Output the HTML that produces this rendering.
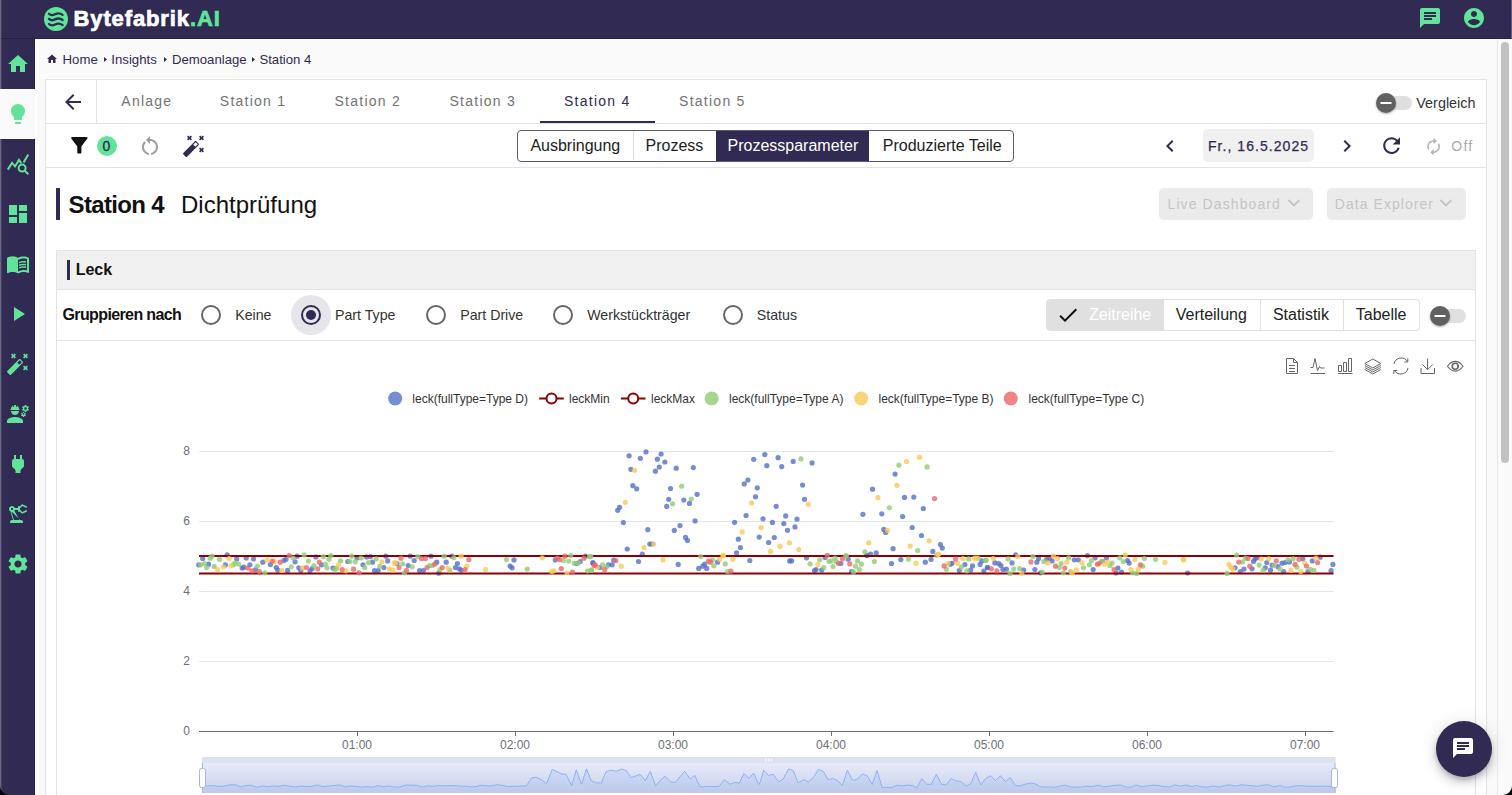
<!DOCTYPE html>
<html><head><meta charset="utf-8"><style>
html,body{margin:0;padding:0;}
body{width:1512px;height:795px;overflow:hidden;position:relative;background:#fafafa;font-family:"Liberation Sans", sans-serif;}
.t{position:absolute;white-space:nowrap;}
.b{position:absolute;}
</style></head><body>
<div class="b" style="left:0px;top:0px;width:1512px;height:39px;background:#312a52"></div>
<div class="b" style="left:0px;top:39px;width:35px;height:756px;background:#312a52"></div>
<div class="b" style="left:0px;top:89px;width:35px;height:50px;background:#fafafa"></div>
<div class="b" style="left:34px;top:39px;width:1px;height:50px;background:#261f4a"></div>
<div class="b" style="left:34px;top:139px;width:1px;height:656px;background:#261f4a"></div>
<div class="b" style="left:35px;top:39px;width:2px;height:756px;background:#fff"></div>
<div class="b" style="left:0px;top:38px;width:1512px;height:1px;background:#261f48"></div>
<div class="b" style="left:35px;top:39px;width:1462px;height:1px;background:#fff"></div>
<svg class="b" style="left:6px;top:52px;color:#62e39a" width="24" height="24" viewBox="0 0 24 24" fill="#62e39a"><path d="M10 20v-6h4v6h5v-8h3L12 3 2 12h3v8z"/></svg>
<svg class="b" style="left:6px;top:102px;color:#62e39a" width="24" height="24" viewBox="0 0 24 24" fill="#62e39a"><path d="M9 21c0 .55.45 1 1 1h4c.55 0 1-.45 1-1v-1H9v1zm3-19C8.14 2 5 5.14 5 9c0 2.38 1.19 4.47 3 5.74V17c0 .55.45 1 1 1h6c.55 0 1-.45 1-1v-2.26c1.81-1.27 3-3.36 3-5.74 0-3.86-3.14-7-7-7z"/></svg>
<svg class="b" style="left:6px;top:152px;color:#62e39a" width="24" height="24" viewBox="0 0 24 24" fill="#62e39a"><g fill="none" stroke="currentColor" stroke-width="2"><path d="M1.8 17.6 6 10.9l3 3.5 4-6.5 2.2 3.3"/><path d="M17.6 10.6 22.2 2.6"/><circle cx="16.1" cy="16.1" r="3.5"/><path d="M18.6 18.6 22.3 22.3"/></g></svg>
<svg class="b" style="left:6px;top:202px;color:#62e39a" width="24" height="24" viewBox="0 0 24 24" fill="#62e39a"><path d="M3 13h8V3H3v10zm0 8h8v-6H3v6zm10 0h8V11h-8v10zm0-18v6h8V3h-8z"/></svg>
<svg class="b" style="left:6px;top:252px;color:#62e39a" width="24" height="24" viewBox="0 0 24 24" fill="#62e39a"><path d="M21 5c-1.11-.35-2.33-.5-3.5-.5-1.95 0-4.05.4-5.5 1.5-1.45-1.1-3.55-1.5-5.5-1.5S2.45 4.9 1 6v14.65c0 .25.25.5.5.5.1 0 .15-.05.25-.05C3.1 20.45 5.05 20 6.5 20c1.95 0 4.05.4 5.5 1.5 1.35-.85 3.8-1.5 5.5-1.5 1.65 0 3.35.3 4.75 1.05.1.05.15.05.25.05.25 0 .5-.25.5-.5V6c-.6-.45-1.25-.75-2-1zm0 13.5c-1.1-.35-2.3-.5-3.5-.5-1.7 0-4.15.65-5.5 1.5V8c1.35-.85 3.8-1.5 5.5-1.5 1.2 0 2.4.15 3.5.5v11.5z"/><path d="M17.5 10.5c.88 0 1.73.09 2.5.26V9.24c-.79-.15-1.64-.24-2.5-.24-1.7 0-3.24.29-4.5.83v1.66c1.13-.64 2.7-.99 4.5-.99zM13 12.49v1.66c1.13-.64 2.7-.99 4.5-.99.88 0 1.73.09 2.5.26V11.9c-.79-.15-1.64-.24-2.5-.24-1.7 0-3.24.3-4.5.83zM17.5 14.33c-1.7 0-3.24.29-4.5.83v1.66c1.13-.64 2.7-.99 4.5-.99.88 0 1.73.09 2.5.26v-1.52c-.79-.16-1.64-.24-2.5-.24z"/><path d="M1.5 6.2C3 5.2 4.6 4.7 6.5 4.7s3.9.4 5.3 1.4V20.8C10.3 19.9 8.3 19.5 6.5 19.5c-1.9 0-3.6.4-5 1z"/></svg>
<svg class="b" style="left:6px;top:302px;color:#62e39a" width="24" height="24" viewBox="0 0 24 24" fill="#62e39a"><path d="M8 5v14l11-7z"/></svg>
<svg class="b" style="left:6px;top:352px;color:#62e39a" width="24" height="24" viewBox="0 0 24 24" fill="#62e39a"><g stroke="currentColor" stroke-width="1.6" fill="none"><path d="M5.6 2.1l3.8 3.8M9.4 2.1 5.6 5.9M17.6 2.1l3.8 3.8M21.4 2.1l-3.8 3.8M17.6 14.1l3.8 3.8M21.4 14.1l-3.8 3.8"/></g><path d="M13.34 12.78l2.44-2.44-2.12-2.12-2.44 2.44zM14.37 7.29l2.34 2.34c.39.37.39 1.02 0 1.41L5.04 22.71c-.39.39-1.04.39-1.41 0l-2.34-2.34c-.39-.37-.39-1.02 0-1.41L12.96 7.29c.39-.39 1.04-.39 1.41 0z"/></svg>
<svg class="b" style="left:6px;top:402px;color:#62e39a" width="24" height="24" viewBox="0 0 24 24" fill="#62e39a"><path d="M9 15c-2.67 0-8 1.34-8 4v2h16v-2c0-2.66-5.33-4-8-4zM5 9c0 2.21 1.79 4 4 4s4-1.79 4-4M4.74 8h8.52c.27 0 .49-.22.49-.49v-.02c0-.27-.22-.49-.49-.49H13c0-1.48-.81-2.75-2-3.45v.95c0 .28-.22.5-.5.5s-.5-.22-.5-.5V3.14C9.68 3.06 9.35 3 9 3s-.68.06-1 .14V4.5c0 .28-.22.5-.5.5S7 4.78 7 4.5v-.95C5.81 4.25 5 5.52 5 7h-.26c-.27 0-.49.22-.49.49v.03c0 .26.22.48.49.48z"/><path d="M21.98 6.23l.93-.83-.75-1.3-1.19.39c-.14-.11-.3-.2-.47-.27L20.25 3h-1.5l-.25 1.22c-.17.07-.33.16-.48.27l-1.18-.39-.75 1.3.93.83c-.02.17-.02.35 0 .52l-.93.85.75 1.3 1.2-.38c.13.1.28.18.43.25l.28 1.23h1.5l.27-1.22c.16-.07.3-.15.44-.25l1.19.38.75-1.3-.93-.85c.03-.19.02-.36.01-.53zM19.5 7.75c-.69 0-1.25-.56-1.25-1.25s.56-1.25 1.25-1.25 1.25.56 1.25 1.25-.56 1.25-1.25 1.25zM19.4 10.79l-.85.28c-.1-.08-.21-.14-.33-.19l-.18-.88h-1.07l-.18.87c-.12.05-.24.12-.34.19l-.84-.28-.54.93.66.59c-.01.13-.01.25 0 .37l-.66.61.54.93.86-.27c.1.07.2.13.31.18l.18.88h1.07l.19-.87c.11-.05.22-.11.32-.18l.85.27.54-.93-.66-.61c.01-.13.01-.25 0-.37l.66-.59-.53-.93zM17.5 12.75c-.49 0-.89-.4-.89-.89 0-.49.4-.89.89-.89s.89.4.89.89c0 .49-.4.89-.89.89z"/></svg>
<svg class="b" style="left:6px;top:452px;color:#62e39a" width="24" height="24" viewBox="0 0 24 24" fill="#62e39a"><path d="M16.01 7 16 3h-2v4h-4V3H8v4h-.01C7 6.99 6 7.99 6 8.99v5.49L9.5 18v3h5v-3l3.5-3.51v-5.5c0-1-1-2-1.99-1.99z"/></svg>
<svg class="b" style="left:6px;top:502px;color:#62e39a" width="24" height="24" viewBox="0 0 24 24" fill="#62e39a"><path d="M19.93 8.35l-3.6 1.68L14 7.7V6.3l2.33-2.33 3.6 1.68c.38.18.82.01 1-.36.18-.38.01-.82-.36-1l-3.92-1.83c-.38-.18-.83-.1-1.13.2L13.78 4.4C13.6 4.16 13.32 4 13 4c-.55 0-1 .45-1 1v1H8.82C8.4 4.84 7.3 4 6 4 4.34 4 3 5.34 3 7c0 1.1.6 2.05 1.48 2.57L7.08 18H6c-1.1 0-2 .9-2 2v1h13v-1c0-1.1-.9-2-2-2h-1.62L8.41 8.77c.17-.24.31-.49.41-.77H12v1c0 .55.45 1 1 1 .32 0 .6-.16.78-.4l1.74 1.74c.3.3.75.38 1.13.2l3.92-1.83c.38-.18.54-.62.36-1-.18-.37-.62-.54-1-.36zM6 8c-.55 0-1-.45-1-1s.45-1 1-1 1 .45 1 1-.45 1-1 1zm8.11 10H7.95L5.5 10.1c.22-.01.43-.06.63-.12L14.11 18z"/></svg>
<svg class="b" style="left:6px;top:552px;color:#62e39a" width="24" height="24" viewBox="0 0 24 24" fill="#62e39a"><path d="M19.14 12.94c.04-.3.06-.61.06-.94 0-.32-.02-.64-.07-.94l2.03-1.58c.18-.14.23-.41.12-.61l-1.92-3.32c-.12-.22-.37-.29-.59-.22l-2.39.96c-.5-.38-1.03-.7-1.62-.94l-.36-2.54c-.04-.24-.24-.41-.48-.41h-3.84c-.24 0-.43.17-.47.41l-.36 2.54c-.59.24-1.13.57-1.62.94l-2.39-.96c-.22-.08-.47 0-.59.22L2.74 8.87c-.12.21-.08.47.12.61l2.03 1.58c-.05.3-.09.63-.09.94s.02.64.07.94l-2.03 1.58c-.18.14-.23.41-.12.61l1.92 3.32c.12.22.37.29.59.22l2.39-.96c.5.38 1.03.7 1.62.94l.36 2.54c.05.24.24.41.48.41h3.84c.24 0 .44-.17.47-.41l.36-2.54c.59-.24 1.13-.56 1.62-.94l2.39.96c.22.08.47 0 .59-.22l1.92-3.32c.12-.22.07-.47-.12-.61l-2.01-1.58zM12 15.6c-1.98 0-3.6-1.62-3.6-3.6s1.62-3.6 3.6-3.6 3.6 1.62 3.6 3.6-1.62 3.6-3.6 3.6z"/></svg>
<svg class="b" style="left:44px;top:7px;" width="24" height="24" viewBox="0 0 24 24"><circle cx="12" cy="12" r="12" fill="#62e39a"/><g fill="none" stroke="#312a52" stroke-width="2.3" stroke-linecap="round"><path d="M5 6.8C6.6 8.4 8.6 8.5 11 7.3S15.6 5.6 18.6 7.9"/><path d="M5 11.9C6.6 13.5 8.6 13.6 11 12.4S15.6 10.7 18.6 13"/><path d="M5 17C6.6 18.6 8.6 18.7 11 17.5S15.6 15.8 18.6 18.1"/></g></svg>
<div class="t" style="left:73.5px;top:8.18px;font-size:22px;line-height:22px;color:#fff;font-weight:bold;letter-spacing:0.88px;-webkit-text-stroke:0.7px #fff">Bytefabrik<span style="color:#62e39a;-webkit-text-stroke:0.7px #62e39a">.AI</span></div>
<svg class="b" style="left:1417.8px;top:6.1px;color:#62e39a" width="24" height="24" viewBox="0 0 24 24" fill="#62e39a"><path d="M20 2H4c-1.1 0-1.99.9-1.99 2L2 22l4-4h14c1.1 0 2-.9 2-2V4c0-1.1-.9-2-2-2zM6 9h12v2H6V9zm8 5H6v-2h8v2zm4-6H6V6h12v2z"/></svg>
<svg class="b" style="left:1461.8px;top:6.2px;color:#62e39a" width="24" height="24" viewBox="0 0 24 24" fill="#62e39a"><path d="M12 2C6.48 2 2 6.48 2 12s4.48 10 10 10 10-4.48 10-10S17.52 2 12 2zm0 3c1.66 0 3 1.34 3 3s-1.34 3-3 3-3-1.34-3-3 1.34-3 3-3zm0 14.2c-2.5 0-4.71-1.28-6-3.22.03-1.99 4-3.08 6-3.08 1.99 0 5.97 1.09 6 3.08-1.29 1.94-3.5 3.22-6 3.22z"/></svg>
<svg class="b" style="left:46px;top:53px;color:#312a52" width="12" height="12" viewBox="0 0 24 24" fill="#312a52"><path d="M10 20v-6h4v6h5v-8h3L12 3 2 12h3v8z"/></svg>
<div class="t" style="left:62.6px;top:52.73px;font-size:13.2px;line-height:13.2px;color:#312a52;font-weight:normal;letter-spacing:0px;">Home</div>
<div class="t" style="left:111.3px;top:52.73px;font-size:13.2px;line-height:13.2px;color:#312a52;font-weight:normal;letter-spacing:0px;">Insights</div>
<div class="t" style="left:171.9px;top:52.73px;font-size:13.2px;line-height:13.2px;color:#312a52;font-weight:normal;letter-spacing:0px;">Demoanlage</div>
<div class="t" style="left:259.4px;top:52.73px;font-size:13.2px;line-height:13.2px;color:#312a52;font-weight:normal;letter-spacing:0px;">Station 4</div>
<svg class="b" style="left:104px;top:56px;" width="4" height="7" viewBox="0 0 4 7"><path d="M0 1 3 3.5 0 6z" fill="#312a52"/></svg>
<svg class="b" style="left:164px;top:56px;" width="4" height="7" viewBox="0 0 4 7"><path d="M0 1 3 3.5 0 6z" fill="#312a52"/></svg>
<svg class="b" style="left:252px;top:56px;" width="4" height="7" viewBox="0 0 4 7"><path d="M0 1 3 3.5 0 6z" fill="#312a52"/></svg>
<div class="b" style="left:45px;top:79px;width:1442px;height:800px;background:#fff;border:1px solid #e3e3e3;box-sizing:border-box"></div>
<div class="b" style="left:46px;top:123px;width:1440px;height:1px;background:#e3e3e3"></div>
<div class="b" style="left:96px;top:80px;width:1px;height:43px;background:#e3e3e3"></div>
<svg class="b" style="left:61px;top:90px;color:#312a52" width="24" height="24" viewBox="0 0 24 24" fill="#312a52"><path d="M20 11H7.83l5.59-5.59L12 4l-8 8 8 8 1.41-1.41L7.83 13H20v-2z"/></svg>
<div class="t" style="left:121.3px;top:94.25px;font-size:14px;line-height:14px;color:#737373;font-weight:normal;letter-spacing:1.25px;">Anlage</div>
<div class="t" style="left:219.8px;top:94.25px;font-size:14px;line-height:14px;color:#737373;font-weight:normal;letter-spacing:1.25px;">Station 1</div>
<div class="t" style="left:334.5px;top:94.25px;font-size:14px;line-height:14px;color:#737373;font-weight:normal;letter-spacing:1.25px;">Station 2</div>
<div class="t" style="left:449.5px;top:94.25px;font-size:14px;line-height:14px;color:#737373;font-weight:normal;letter-spacing:1.25px;">Station 3</div>
<div class="t" style="left:564px;top:94.25px;font-size:14px;line-height:14px;color:#312a52;font-weight:normal;letter-spacing:1.25px;">Station 4</div>
<div class="t" style="left:679.1px;top:94.25px;font-size:14px;line-height:14px;color:#737373;font-weight:normal;letter-spacing:1.25px;">Station 5</div>
<div class="b" style="left:540px;top:121px;width:115px;height:2px;background:#312a52"></div>
<div class="b" style="left:1388px;top:96px;width:24px;height:14px;background:#e0e0e0;border-radius:7px"></div>
<svg class="b" style="left:1376px;top:93px;filter:drop-shadow(0 1px 1px rgba(0,0,0,.3))" width="20" height="20" viewBox="0 0 20 20"><circle cx="10" cy="10" r="10" fill="#616161"/><rect x="4.5" y="9" width="11" height="2" fill="#fff"/></svg>
<div class="t" style="left:1416.3px;top:95.91px;font-size:14.4px;line-height:14.4px;color:#333;font-weight:normal;letter-spacing:0px;">Vergleich</div>
<div class="b" style="left:46px;top:167px;width:1440px;height:1px;background:#e3e3e3"></div>
<svg class="b" style="left:67.3px;top:133.4px;color:#111" width="24.7" height="24.7" viewBox="0 0 24 24" fill="#111"><path d="M4.25 5.61C6.27 8.2 10 13 10 13v6c0 .55.45 1 1 1h2c.55 0 1-.45 1-1v-6s3.72-4.8 5.74-7.39c.51-.66.04-1.61-.79-1.61H5.04c-.83 0-1.3.95-.79 1.61z"/></svg>
<svg class="b" style="left:97px;top:136px;" width="20" height="20" viewBox="0 0 20 20"><circle cx="10" cy="10" r="10" fill="#62e39a"/></svg>
<div class="t" style="left:102.6px;top:139.45px;font-size:14px;line-height:14px;color:#312a52;font-weight:normal;letter-spacing:0px;-webkit-text-stroke:0.3px #312a52">0</div>
<svg class="b" style="left:137.8px;top:134.4px;color:#9e9e9e" width="24" height="24" viewBox="0 0 24 24" fill="#9e9e9e"><path d="M12 5V2L8 6l4 4V7c3.31 0 6 2.69 6 6 0 2.97-2.17 5.43-5 5.91v2.02c3.95-.49 7-3.85 7-7.93 0-4.42-3.58-8-8-8zm-6 8c0-1.65.67-3.15 1.76-4.24L6.34 7.34C4.9 8.79 4 10.79 4 13c0 4.08 3.05 7.44 7 7.93v-2.02c-2.83-.48-5-2.94-5-5.91z"/></svg>
<svg class="b" style="left:182px;top:133.7px;color:#312a52" width="24" height="24" viewBox="0 0 24 24" fill="#312a52"><g stroke="currentColor" stroke-width="1.6" fill="none"><path d="M5.6 2.1l3.8 3.8M9.4 2.1 5.6 5.9M17.6 2.1l3.8 3.8M21.4 2.1l-3.8 3.8M17.6 14.1l3.8 3.8M21.4 14.1l-3.8 3.8"/></g><path d="M13.34 12.78l2.44-2.44-2.12-2.12-2.44 2.44zM14.37 7.29l2.34 2.34c.39.37.39 1.02 0 1.41L5.04 22.71c-.39.39-1.04.39-1.41 0l-2.34-2.34c-.39-.37-.39-1.02 0-1.41L12.96 7.29c.39-.39 1.04-.39 1.41 0z"/></svg>
<div class="b" style="left:517px;top:130px;width:497px;height:32px;border:1px solid #5d587a;border-radius:4px;box-sizing:border-box;overflow:hidden"></div>
<div class="b" style="left:716px;top:131px;width:153px;height:30px;background:#312a52"></div>
<div class="b" style="left:633px;top:131px;width:1px;height:29px;background:#e0e0e0"></div>
<div class="t" style="left:530.4px;top:138.36px;font-size:16px;line-height:16px;color:#222;font-weight:normal;letter-spacing:0px;">Ausbringung</div>
<div class="t" style="left:645.5px;top:138.36px;font-size:16px;line-height:16px;color:#222;font-weight:normal;letter-spacing:0px;">Prozess</div>
<div class="t" style="left:727.5px;top:138.36px;font-size:16px;line-height:16px;color:#fff;font-weight:normal;letter-spacing:0px;">Prozessparameter</div>
<div class="t" style="left:882.8px;top:138.36px;font-size:16px;line-height:16px;color:#222;font-weight:normal;letter-spacing:0px;">Produzierte Teile</div>
<svg class="b" style="left:1157.7px;top:133.8px;color:#312a52" width="24" height="24" viewBox="0 0 24 24" fill="#312a52"><path d="M15.41 7.41 14 6l-6 6 6 6 1.41-1.41L10.83 12z"/></svg>
<div class="b" style="left:1203px;top:129px;width:111px;height:33px;background:#f0f0f0;border-radius:5px"></div>
<div class="t" style="left:1208px;top:138.55px;font-size:14px;line-height:14px;color:#312a52;font-weight:normal;letter-spacing:1.05px;-webkit-text-stroke:0.25px #312a52">Fr., 16.5.2025</div>
<svg class="b" style="left:1335.2px;top:133.8px;color:#312a52" width="24" height="24" viewBox="0 0 24 24" fill="#312a52"><path d="M10 6 8.59 7.41 13.17 12l-4.58 4.59L10 18l6-6z"/></svg>
<svg class="b" style="left:1379.2px;top:133.2px;color:#312a52" width="25.2" height="25.2" viewBox="0 0 24 24" fill="#312a52"><path d="M17.65 6.35C16.2 4.9 14.21 4 12 4c-4.42 0-7.99 3.58-7.99 8s3.57 8 7.99 8c3.73 0 6.84-2.55 7.73-6h-2.08c-.82 2.33-3.04 4-5.65 4-3.31 0-6-2.69-6-6s2.69-6 6-6c1.66 0 3.14.69 4.22 1.78L13 11h7V4l-2.35 2.35z"/></svg>
<svg class="b" style="left:1424px;top:136.6px;color:#b3b3b3" width="19.2" height="19.2" viewBox="0 0 24 24" fill="#b3b3b3"><path d="M12 6v3l4-4-4-4v3c-4.42 0-8 3.58-8 8 0 1.57.46 3.03 1.24 4.26L6.7 14.8c-.45-.83-.7-1.79-.7-2.8 0-3.31 2.69-6 6-6zm6.76 1.74L17.3 9.2c.44.84.7 1.79.7 2.8 0 3.31-2.69 6-6 6v-3l-4 4 4 4v-3c4.42 0 8-3.58 8-8 0-1.57-.46-3.03-1.24-4.26z"/></svg>
<div class="t" style="left:1451.3px;top:138.55px;font-size:14px;line-height:14px;color:#ababab;font-weight:normal;letter-spacing:1.25px;">Off</div>
<div class="b" style="left:56px;top:188px;width:4px;height:32px;background:#312a52"></div>
<div class="t" style="left:68.6px;top:192.58px;font-size:24px;line-height:24px;color:#111;font-weight:bold;letter-spacing:-0.68px;">Station 4</div>
<div class="t" style="left:181px;top:192.58px;font-size:24px;line-height:24px;color:#111;font-weight:normal;letter-spacing:0px;">Dichtprüfung</div>
<div class="b" style="left:1159px;top:188px;width:154px;height:32px;background:#ebebeb;border-radius:5px"></div>
<div class="t" style="left:1167.5px;top:197.15px;font-size:14px;line-height:14px;color:#c4c4c4;font-weight:normal;letter-spacing:1.1px;">Live Dashboard</div>
<svg class="b" style="left:1287px;top:198px;" width="14" height="10" viewBox="0 0 14 10"><path d="M1.5 2 7 7.5 12.5 2" fill="none" stroke="#c4c4c4" stroke-width="1.8"/></svg>
<div class="b" style="left:1327px;top:188px;width:139px;height:32px;background:#ebebeb;border-radius:5px"></div>
<div class="t" style="left:1334.8px;top:197.15px;font-size:14px;line-height:14px;color:#c4c4c4;font-weight:normal;letter-spacing:1.05px;">Data Explorer</div>
<svg class="b" style="left:1439px;top:198px;" width="14" height="10" viewBox="0 0 14 10"><path d="M1.5 2 7 7.5 12.5 2" fill="none" stroke="#c4c4c4" stroke-width="1.8"/></svg>
<div class="b" style="left:56px;top:250px;width:1420px;height:700px;background:#fff;border:1px solid #e3e3e3;box-sizing:border-box"></div>
<div class="b" style="left:57px;top:251px;width:1418px;height:38px;background:#f0f0f0"></div>
<div class="b" style="left:57px;top:289px;width:1418px;height:1px;background:#e3e3e3"></div>
<div class="b" style="left:67px;top:260px;width:3px;height:20px;background:#312a52"></div>
<div class="t" style="left:75.7px;top:262.26px;font-size:16px;line-height:16px;color:#111;font-weight:bold;letter-spacing:0px;">Leck</div>
<div class="b" style="left:57px;top:340px;width:1418px;height:1px;background:#e3e3e3"></div>
<div class="t" style="left:62.5px;top:307.06px;font-size:16px;line-height:16px;color:#111;font-weight:bold;letter-spacing:-0.62px;">Gruppieren nach</div>
<svg class="b" style="left:200.6px;top:305px;" width="20" height="20" viewBox="0 0 20 20"><circle cx="10" cy="10" r="9" fill="none" stroke="#666" stroke-width="2"/></svg>
<div class="t" style="left:235.2px;top:308.28px;font-size:14.2px;line-height:14.2px;color:#333;font-weight:normal;letter-spacing:0px;">Keine</div>
<svg class="b" style="left:290.5px;top:295px;" width="40" height="40" viewBox="0 0 40 40"><circle cx="20" cy="20" r="20" fill="#312a52" fill-opacity="0.12"/><circle cx="20" cy="20" r="9" fill="none" stroke="#312a52" stroke-width="2"/><circle cx="20" cy="20" r="5" fill="#312a52"/></svg>
<div class="t" style="left:335px;top:308.28px;font-size:14.2px;line-height:14.2px;color:#333;font-weight:normal;letter-spacing:0px;">Part Type</div>
<svg class="b" style="left:425.9px;top:305px;" width="20" height="20" viewBox="0 0 20 20"><circle cx="10" cy="10" r="9" fill="none" stroke="#666" stroke-width="2"/></svg>
<div class="t" style="left:460.2px;top:308.28px;font-size:14.2px;line-height:14.2px;color:#333;font-weight:normal;letter-spacing:0px;">Part Drive</div>
<svg class="b" style="left:553px;top:305px;" width="20" height="20" viewBox="0 0 20 20"><circle cx="10" cy="10" r="9" fill="none" stroke="#666" stroke-width="2"/></svg>
<div class="t" style="left:587.2px;top:308.28px;font-size:14.2px;line-height:14.2px;color:#333;font-weight:normal;letter-spacing:0px;">Werkstückträger</div>
<svg class="b" style="left:722.9px;top:305px;" width="20" height="20" viewBox="0 0 20 20"><circle cx="10" cy="10" r="9" fill="none" stroke="#666" stroke-width="2"/></svg>
<div class="t" style="left:756.8px;top:308.28px;font-size:14.2px;line-height:14.2px;color:#333;font-weight:normal;letter-spacing:0px;">Status</div>
<div class="b" style="left:1046px;top:299px;width:374px;height:32px;border:1px solid #e0e0e0;border-radius:4px;box-sizing:border-box"></div>
<div class="b" style="left:1047px;top:300px;width:116px;height:30px;background:#e0e0e0"></div>
<div class="b" style="left:1163px;top:300px;width:1px;height:30px;background:#e0e0e0"></div>
<div class="b" style="left:1260px;top:300px;width:1px;height:30px;background:#e0e0e0"></div>
<div class="b" style="left:1343px;top:300px;width:1px;height:30px;background:#e0e0e0"></div>
<svg class="b" style="left:1056px;top:302.7px;color:#111" width="24" height="24" viewBox="0 0 24 24" fill="#111"><path d="M9 16.17 4.83 12l-1.42 1.42L9 19 21 7l-1.41-1.41z"/></svg>
<div class="t" style="left:1089px;top:307.46px;font-size:16px;line-height:16px;color:#fff;font-weight:normal;letter-spacing:0px;">Zeitreihe</div>
<div class="t" style="left:1175.7px;top:307.46px;font-size:16px;line-height:16px;color:#222;font-weight:normal;letter-spacing:0px;">Verteilung</div>
<div class="t" style="left:1272.9px;top:307.46px;font-size:16px;line-height:16px;color:#222;font-weight:normal;letter-spacing:0px;">Statistik</div>
<div class="t" style="left:1355.8px;top:307.46px;font-size:16px;line-height:16px;color:#222;font-weight:normal;letter-spacing:0px;">Tabelle</div>
<div class="b" style="left:1440px;top:309px;width:26px;height:14px;background:#e0e0e0;border-radius:7px"></div>
<svg class="b" style="left:1430px;top:306px;filter:drop-shadow(0 1px 1px rgba(0,0,0,.3))" width="20" height="20" viewBox="0 0 20 20"><circle cx="10" cy="10" r="10" fill="#616161"/><rect x="4.5" y="9" width="11" height="2" fill="#fff"/></svg>
<svg class="b" style="left:0px;top:0px;" width="1512" height="795" viewBox="0 0 1512 795"><path d="M199 661.5H1333.6" stroke="#e0e6f1" stroke-width="1"/><path d="M199 591.5H1333.6" stroke="#e0e6f1" stroke-width="1"/><path d="M199 521.5H1333.6" stroke="#e0e6f1" stroke-width="1"/><path d="M199 451.5H1333.6" stroke="#e0e6f1" stroke-width="1"/><path d="M199 731.5H1333.6" stroke="#6e7079" stroke-width="1"/><path d="M357.5 731V736" stroke="#6e7079" stroke-width="1"/><path d="M515.5 731V736" stroke="#6e7079" stroke-width="1"/><path d="M673.5 731V736" stroke="#6e7079" stroke-width="1"/><path d="M831.5 731V736" stroke="#6e7079" stroke-width="1"/><path d="M989.5 731V736" stroke="#6e7079" stroke-width="1"/><path d="M1147.5 731V736" stroke="#6e7079" stroke-width="1"/><path d="M1305.5 731V736" stroke="#6e7079" stroke-width="1"/><g fill="#5470c6" fill-opacity="0.8"><circle cx="629.1" cy="455.8" r="2.6"/><circle cx="640.3" cy="458.3" r="2.6"/><circle cx="646.0" cy="451.9" r="2.6"/><circle cx="661.1" cy="454.0" r="2.6"/><circle cx="657.4" cy="459.2" r="2.6"/><circle cx="664.9" cy="462.0" r="2.6"/><circle cx="659.3" cy="467.0" r="2.6"/><circle cx="655.4" cy="471.2" r="2.6"/><circle cx="630.9" cy="469.3" r="2.6"/><circle cx="676.2" cy="468.2" r="2.6"/><circle cx="693.3" cy="467.6" r="2.6"/><circle cx="632.8" cy="485.7" r="2.6"/><circle cx="636.7" cy="488.8" r="2.6"/><circle cx="670.5" cy="488.5" r="2.6"/><circle cx="697.1" cy="494.3" r="2.6"/><circle cx="668.7" cy="499.3" r="2.6"/><circle cx="683.8" cy="500.1" r="2.6"/><circle cx="689.5" cy="503.4" r="2.6"/><circle cx="666.7" cy="506.4" r="2.6"/><circle cx="619.6" cy="507.3" r="2.6"/><circle cx="617.7" cy="510.3" r="2.6"/><circle cx="623.4" cy="522.6" r="2.6"/><circle cx="695.1" cy="520.9" r="2.6"/><circle cx="647.8" cy="529.7" r="2.6"/><circle cx="680.0" cy="525.6" r="2.6"/><circle cx="674.3" cy="530.4" r="2.6"/><circle cx="685.6" cy="537.4" r="2.6"/><circle cx="687.5" cy="540.5" r="2.6"/><circle cx="649.8" cy="544.0" r="2.6"/><circle cx="652.1" cy="544.0" r="2.6"/><circle cx="627.2" cy="549.0" r="2.6"/><circle cx="642.3" cy="554.0" r="2.6"/><circle cx="753.7" cy="459.3" r="2.6"/><circle cx="764.8" cy="454.6" r="2.6"/><circle cx="778.1" cy="457.7" r="2.6"/><circle cx="766.8" cy="465.7" r="2.6"/><circle cx="781.7" cy="466.6" r="2.6"/><circle cx="793.2" cy="461.4" r="2.6"/><circle cx="812.1" cy="462.9" r="2.6"/><circle cx="747.9" cy="480.0" r="2.6"/><circle cx="744.2" cy="483.9" r="2.6"/><circle cx="757.3" cy="487.8" r="2.6"/><circle cx="802.6" cy="485.1" r="2.6"/><circle cx="755.5" cy="496.8" r="2.6"/><circle cx="804.5" cy="499.3" r="2.6"/><circle cx="776.2" cy="506.3" r="2.6"/><circle cx="746.1" cy="515.5" r="2.6"/><circle cx="763.0" cy="518.8" r="2.6"/><circle cx="785.7" cy="515.9" r="2.6"/><circle cx="797.0" cy="519.2" r="2.6"/><circle cx="734.6" cy="522.3" r="2.6"/><circle cx="772.4" cy="522.4" r="2.6"/><circle cx="783.8" cy="523.6" r="2.6"/><circle cx="795.0" cy="526.9" r="2.6"/><circle cx="787.5" cy="530.3" r="2.6"/><circle cx="738.4" cy="539.2" r="2.6"/><circle cx="759.2" cy="537.1" r="2.6"/><circle cx="774.3" cy="537.5" r="2.6"/><circle cx="768.6" cy="542.5" r="2.6"/><circle cx="740.4" cy="547.6" r="2.6"/><circle cx="736.6" cy="552.8" r="2.6"/><circle cx="895.1" cy="474.1" r="2.6"/><circle cx="872.5" cy="489.2" r="2.6"/><circle cx="904.5" cy="497.4" r="2.6"/><circle cx="913.8" cy="497.1" r="2.6"/><circle cx="923.3" cy="508.5" r="2.6"/><circle cx="862.9" cy="514.3" r="2.6"/><circle cx="881.8" cy="513.8" r="2.6"/><circle cx="902.6" cy="516.5" r="2.6"/><circle cx="883.8" cy="529.4" r="2.6"/><circle cx="885.7" cy="532.4" r="2.6"/><circle cx="912.2" cy="527.5" r="2.6"/><circle cx="921.5" cy="535.5" r="2.6"/><circle cx="940.4" cy="544.5" r="2.6"/><circle cx="942.3" cy="548.1" r="2.6"/><circle cx="893.1" cy="548.7" r="2.6"/><circle cx="932.8" cy="551.4" r="2.6"/><circle cx="876.2" cy="552.9" r="2.6"/><circle cx="870.6" cy="554.1" r="2.6"/><circle cx="866.9" cy="555.6" r="2.6"/><circle cx="198.7" cy="564.8" r="2.6"/><circle cx="202.7" cy="558.5" r="2.6"/><circle cx="208.5" cy="564.2" r="2.6"/><circle cx="225.4" cy="564.8" r="2.6"/><circle cx="227.1" cy="554.9" r="2.6"/><circle cx="236.7" cy="558.9" r="2.6"/><circle cx="242.2" cy="568.1" r="2.6"/><circle cx="243.9" cy="567.2" r="2.6"/><circle cx="246.2" cy="558.0" r="2.6"/><circle cx="249.9" cy="564.8" r="2.6"/><circle cx="253.6" cy="558.9" r="2.6"/><circle cx="255.6" cy="569.5" r="2.6"/><circle cx="262.9" cy="562.2" r="2.6"/><circle cx="270.4" cy="564.6" r="2.6"/><circle cx="276.3" cy="567.5" r="2.6"/><circle cx="277.7" cy="570.1" r="2.6"/><circle cx="283.9" cy="560.6" r="2.6"/><circle cx="286.0" cy="559.3" r="2.6"/><circle cx="287.6" cy="570.4" r="2.6"/><circle cx="295.1" cy="561.8" r="2.6"/><circle cx="297.1" cy="556.2" r="2.6"/><circle cx="298.8" cy="567.8" r="2.6"/><circle cx="300.8" cy="570.4" r="2.6"/><circle cx="310.1" cy="570.8" r="2.6"/><circle cx="312.1" cy="568.5" r="2.6"/><circle cx="315.8" cy="556.9" r="2.6"/><circle cx="321.6" cy="564.8" r="2.6"/><circle cx="333.0" cy="568.1" r="2.6"/><circle cx="347.8" cy="561.5" r="2.6"/><circle cx="357.0" cy="558.0" r="2.6"/><circle cx="363.0" cy="564.8" r="2.6"/><circle cx="366.6" cy="556.9" r="2.6"/><circle cx="370.5" cy="556.6" r="2.6"/><circle cx="372.5" cy="562.2" r="2.6"/><circle cx="374.5" cy="570.5" r="2.6"/><circle cx="378.2" cy="570.5" r="2.6"/><circle cx="383.9" cy="567.5" r="2.6"/><circle cx="385.7" cy="556.2" r="2.6"/><circle cx="387.7" cy="560.9" r="2.6"/><circle cx="397.0" cy="563.5" r="2.6"/><circle cx="408.2" cy="565.5" r="2.6"/><circle cx="410.2" cy="556.2" r="2.6"/><circle cx="414.2" cy="560.5" r="2.6"/><circle cx="419.5" cy="570.5" r="2.6"/><circle cx="423.4" cy="570.5" r="2.6"/><circle cx="431.0" cy="556.2" r="2.6"/><circle cx="436.7" cy="562.2" r="2.6"/><circle cx="438.7" cy="573.2" r="2.6"/><circle cx="446.2" cy="562.2" r="2.6"/><circle cx="451.9" cy="556.2" r="2.6"/><circle cx="455.4" cy="567.5" r="2.6"/><circle cx="457.4" cy="563.5" r="2.6"/><circle cx="459.2" cy="568.8" r="2.6"/><circle cx="461.1" cy="570.1" r="2.6"/><circle cx="510.1" cy="566.2" r="2.6"/><circle cx="512.1" cy="567.8" r="2.6"/><circle cx="514.0" cy="559.9" r="2.6"/><circle cx="555.3" cy="559.9" r="2.6"/><circle cx="580.2" cy="561.5" r="2.6"/><circle cx="576.5" cy="563.5" r="2.6"/><circle cx="585.5" cy="556.2" r="2.6"/><circle cx="593.0" cy="562.9" r="2.6"/><circle cx="592.9" cy="562.9" r="2.6"/><circle cx="599.9" cy="567.5" r="2.6"/><circle cx="608.5" cy="564.8" r="2.6"/><circle cx="612.2" cy="564.8" r="2.6"/><circle cx="613.8" cy="560.2" r="2.6"/><circle cx="638.5" cy="561.5" r="2.6"/><circle cx="678.2" cy="564.4" r="2.6"/><circle cx="698.7" cy="568.4" r="2.6"/><circle cx="702.7" cy="566.2" r="2.6"/><circle cx="704.7" cy="564.2" r="2.6"/><circle cx="706.7" cy="568.4" r="2.6"/><circle cx="717.6" cy="562.2" r="2.6"/><circle cx="749.8" cy="560.5" r="2.6"/><circle cx="789.7" cy="560.9" r="2.6"/><circle cx="791.6" cy="560.9" r="2.6"/><circle cx="806.5" cy="557.8" r="2.6"/><circle cx="814.5" cy="570.5" r="2.6"/><circle cx="816.1" cy="569.5" r="2.6"/><circle cx="821.7" cy="570.1" r="2.6"/><circle cx="825.1" cy="557.6" r="2.6"/><circle cx="840.9" cy="563.5" r="2.6"/><circle cx="848.2" cy="559.2" r="2.6"/><circle cx="851.5" cy="571.5" r="2.6"/><circle cx="866.7" cy="555.3" r="2.6"/><circle cx="891.5" cy="563.5" r="2.6"/><circle cx="900.8" cy="559.6" r="2.6"/><circle cx="925.3" cy="562.2" r="2.6"/><circle cx="931.1" cy="559.3" r="2.6"/><circle cx="950.1" cy="564.2" r="2.6"/><circle cx="952.0" cy="563.3" r="2.6"/><circle cx="959.3" cy="570.5" r="2.6"/><circle cx="964.9" cy="564.6" r="2.6"/><circle cx="970.6" cy="570.1" r="2.6"/><circle cx="972.5" cy="565.9" r="2.6"/><circle cx="980.1" cy="564.4" r="2.6"/><circle cx="981.8" cy="560.9" r="2.6"/><circle cx="983.8" cy="571.1" r="2.6"/><circle cx="987.4" cy="567.5" r="2.6"/><circle cx="987.6" cy="567.5" r="2.6"/><circle cx="994.9" cy="562.9" r="2.6"/><circle cx="998.9" cy="563.5" r="2.6"/><circle cx="1000.9" cy="565.5" r="2.6"/><circle cx="1002.9" cy="569.5" r="2.6"/><circle cx="1006.4" cy="569.2" r="2.6"/><circle cx="1012.1" cy="562.9" r="2.6"/><circle cx="1015.7" cy="554.9" r="2.6"/><circle cx="1023.6" cy="570.1" r="2.6"/><circle cx="1034.9" cy="569.5" r="2.6"/><circle cx="1036.9" cy="562.2" r="2.6"/><circle cx="1038.6" cy="558.6" r="2.6"/><circle cx="1040.6" cy="572.8" r="2.6"/><circle cx="1046.5" cy="559.6" r="2.6"/><circle cx="1049.8" cy="558.2" r="2.6"/><circle cx="1052.1" cy="560.9" r="2.6"/><circle cx="1074.3" cy="559.8" r="2.6"/><circle cx="1078.3" cy="559.8" r="2.6"/><circle cx="1087.5" cy="555.6" r="2.6"/><circle cx="1093.2" cy="569.5" r="2.6"/><circle cx="1095.1" cy="557.8" r="2.6"/><circle cx="1102.3" cy="561.5" r="2.6"/><circle cx="1106.4" cy="558.0" r="2.6"/><circle cx="1117.9" cy="568.1" r="2.6"/><circle cx="1121.5" cy="572.1" r="2.6"/><circle cx="1127.5" cy="560.5" r="2.6"/><circle cx="1129.2" cy="563.1" r="2.6"/><circle cx="1116.0" cy="573.0" r="2.6"/><circle cx="1187.6" cy="573.0" r="2.6"/><circle cx="1235.0" cy="567.8" r="2.6"/><circle cx="1240.3" cy="571.5" r="2.6"/><circle cx="1244.0" cy="569.1" r="2.6"/><circle cx="1252.0" cy="568.8" r="2.6"/><circle cx="1253.5" cy="561.4" r="2.6"/><circle cx="1255.1" cy="558.8" r="2.6"/><circle cx="1257.2" cy="557.7" r="2.6"/><circle cx="1266.8" cy="562.5" r="2.6"/><circle cx="1265.2" cy="567.8" r="2.6"/><circle cx="1270.5" cy="570.2" r="2.6"/><circle cx="1272.1" cy="565.1" r="2.6"/><circle cx="1277.9" cy="566.7" r="2.6"/><circle cx="1282.1" cy="563.2" r="2.6"/><circle cx="1285.3" cy="562.5" r="2.6"/><circle cx="1289.5" cy="561.9" r="2.6"/><circle cx="1283.7" cy="571.5" r="2.6"/><circle cx="1302.8" cy="558.8" r="2.6"/><circle cx="1308.0" cy="571.5" r="2.6"/><circle cx="1312.3" cy="560.9" r="2.6"/><circle cx="1320.2" cy="557.2" r="2.6"/><circle cx="1332.9" cy="564.4" r="2.6"/><circle cx="1331.1" cy="570.7" r="2.6"/></g><path d="M199 556H1333.5M199 573.5H1333.5" stroke="#8b0000" stroke-width="2"/><g fill="#91cc75" fill-opacity="0.8"><circle cx="681.7" cy="486.2" r="2.6"/><circle cx="691.3" cy="499.0" r="2.6"/><circle cx="672.5" cy="503.8" r="2.6"/><circle cx="800.9" cy="458.9" r="2.6"/><circle cx="898.9" cy="465.2" r="2.6"/><circle cx="927.1" cy="466.9" r="2.6"/><circle cx="889.4" cy="507.8" r="2.6"/><circle cx="864.9" cy="551.8" r="2.6"/><circle cx="917.7" cy="550.5" r="2.6"/><circle cx="846.0" cy="555.9" r="2.6"/><circle cx="200.6" cy="564.8" r="2.6"/><circle cx="204.5" cy="563.5" r="2.6"/><circle cx="206.6" cy="567.5" r="2.6"/><circle cx="210.2" cy="558.2" r="2.6"/><circle cx="212.2" cy="556.2" r="2.6"/><circle cx="214.2" cy="566.4" r="2.6"/><circle cx="219.5" cy="559.3" r="2.6"/><circle cx="234.7" cy="563.3" r="2.6"/><circle cx="233.4" cy="564.8" r="2.6"/><circle cx="238.7" cy="564.2" r="2.6"/><circle cx="257.4" cy="566.2" r="2.6"/><circle cx="264.8" cy="572.8" r="2.6"/><circle cx="291.3" cy="566.8" r="2.6"/><circle cx="293.1" cy="558.0" r="2.6"/><circle cx="304.1" cy="554.9" r="2.6"/><circle cx="308.4" cy="561.1" r="2.6"/><circle cx="314.0" cy="565.5" r="2.6"/><circle cx="323.3" cy="556.6" r="2.6"/><circle cx="325.3" cy="564.2" r="2.6"/><circle cx="327.0" cy="567.8" r="2.6"/><circle cx="329.0" cy="559.3" r="2.6"/><circle cx="330.8" cy="555.6" r="2.6"/><circle cx="334.9" cy="569.5" r="2.6"/><circle cx="336.8" cy="568.1" r="2.6"/><circle cx="340.5" cy="560.9" r="2.6"/><circle cx="349.8" cy="561.5" r="2.6"/><circle cx="351.7" cy="556.2" r="2.6"/><circle cx="355.3" cy="561.8" r="2.6"/><circle cx="361.0" cy="558.0" r="2.6"/><circle cx="364.7" cy="567.5" r="2.6"/><circle cx="368.5" cy="562.6" r="2.6"/><circle cx="376.2" cy="558.9" r="2.6"/><circle cx="379.9" cy="566.2" r="2.6"/><circle cx="402.7" cy="563.8" r="2.6"/><circle cx="404.5" cy="572.8" r="2.6"/><circle cx="412.2" cy="566.8" r="2.6"/><circle cx="417.8" cy="556.6" r="2.6"/><circle cx="429.7" cy="565.5" r="2.6"/><circle cx="432.3" cy="565.5" r="2.6"/><circle cx="440.0" cy="569.5" r="2.6"/><circle cx="444.2" cy="556.2" r="2.6"/><circle cx="449.9" cy="570.4" r="2.6"/><circle cx="453.9" cy="557.6" r="2.6"/><circle cx="506.4" cy="559.6" r="2.6"/><circle cx="527.3" cy="569.1" r="2.6"/><circle cx="563.3" cy="560.5" r="2.6"/><circle cx="568.7" cy="561.1" r="2.6"/><circle cx="570.7" cy="555.6" r="2.6"/><circle cx="574.2" cy="563.3" r="2.6"/><circle cx="578.2" cy="562.9" r="2.6"/><circle cx="587.5" cy="570.8" r="2.6"/><circle cx="591.4" cy="570.1" r="2.6"/><circle cx="589.4" cy="556.6" r="2.6"/><circle cx="590.7" cy="556.6" r="2.6"/><circle cx="591.3" cy="570.4" r="2.6"/><circle cx="602.6" cy="564.8" r="2.6"/><circle cx="606.5" cy="566.8" r="2.6"/><circle cx="700.8" cy="556.6" r="2.6"/><circle cx="712.4" cy="560.2" r="2.6"/><circle cx="713.9" cy="565.8" r="2.6"/><circle cx="725.2" cy="563.9" r="2.6"/><circle cx="727.6" cy="571.5" r="2.6"/><circle cx="810.1" cy="563.9" r="2.6"/><circle cx="819.8" cy="559.8" r="2.6"/><circle cx="823.7" cy="567.5" r="2.6"/><circle cx="829.0" cy="561.5" r="2.6"/><circle cx="831.0" cy="560.9" r="2.6"/><circle cx="833.0" cy="566.6" r="2.6"/><circle cx="835.0" cy="558.2" r="2.6"/><circle cx="836.3" cy="561.5" r="2.6"/><circle cx="846.2" cy="555.8" r="2.6"/><circle cx="855.5" cy="566.2" r="2.6"/><circle cx="857.5" cy="560.9" r="2.6"/><circle cx="859.4" cy="569.5" r="2.6"/><circle cx="861.4" cy="564.2" r="2.6"/><circle cx="874.4" cy="561.5" r="2.6"/><circle cx="908.4" cy="559.2" r="2.6"/><circle cx="936.6" cy="555.3" r="2.6"/><circle cx="946.3" cy="569.2" r="2.6"/><circle cx="961.3" cy="567.2" r="2.6"/><circle cx="967.0" cy="570.8" r="2.6"/><circle cx="968.8" cy="558.9" r="2.6"/><circle cx="978.2" cy="558.2" r="2.6"/><circle cx="985.8" cy="560.5" r="2.6"/><circle cx="853.5" cy="572.1" r="2.6"/><circle cx="986.1" cy="560.2" r="2.6"/><circle cx="1008.1" cy="558.9" r="2.6"/><circle cx="1010.1" cy="573.4" r="2.6"/><circle cx="1013.8" cy="569.1" r="2.6"/><circle cx="1019.7" cy="568.5" r="2.6"/><circle cx="1032.9" cy="556.6" r="2.6"/><circle cx="1043.9" cy="561.5" r="2.6"/><circle cx="1042.1" cy="572.1" r="2.6"/><circle cx="1061.1" cy="563.5" r="2.6"/><circle cx="1059.3" cy="567.5" r="2.6"/><circle cx="1063.3" cy="572.8" r="2.6"/><circle cx="1068.6" cy="557.8" r="2.6"/><circle cx="1070.7" cy="571.5" r="2.6"/><circle cx="1083.5" cy="567.8" r="2.6"/><circle cx="1089.5" cy="564.8" r="2.6"/><circle cx="1091.5" cy="560.5" r="2.6"/><circle cx="1101.4" cy="561.5" r="2.6"/><circle cx="1110.0" cy="565.5" r="2.6"/><circle cx="1112.0" cy="563.1" r="2.6"/><circle cx="1119.7" cy="557.8" r="2.6"/><circle cx="1123.2" cy="561.5" r="2.6"/><circle cx="1132.8" cy="572.8" r="2.6"/><circle cx="1136.7" cy="573.4" r="2.6"/><circle cx="1142.7" cy="566.2" r="2.6"/><circle cx="1144.4" cy="558.5" r="2.6"/><circle cx="1155.6" cy="559.3" r="2.6"/><circle cx="1236.6" cy="555.1" r="2.6"/><circle cx="1242.4" cy="561.9" r="2.6"/><circle cx="1245.6" cy="558.2" r="2.6"/><circle cx="1259.2" cy="565.1" r="2.6"/><circle cx="1263.1" cy="570.2" r="2.6"/><circle cx="1274.2" cy="565.6" r="2.6"/><circle cx="1280.0" cy="569.1" r="2.6"/><circle cx="1287.9" cy="559.8" r="2.6"/><circle cx="1293.2" cy="558.8" r="2.6"/><circle cx="1296.9" cy="567.2" r="2.6"/><circle cx="1310.2" cy="569.3" r="2.6"/><circle cx="1313.9" cy="570.4" r="2.6"/><circle cx="1227.1" cy="573.4" r="2.6"/></g><g fill="#fac858" fill-opacity="0.8"><circle cx="634.7" cy="470.3" r="2.6"/><circle cx="625.4" cy="502.3" r="2.6"/><circle cx="653.6" cy="544.0" r="2.6"/><circle cx="644.1" cy="547.5" r="2.6"/><circle cx="751.7" cy="502.9" r="2.6"/><circle cx="808.3" cy="504.2" r="2.6"/><circle cx="742.2" cy="531.9" r="2.6"/><circle cx="761.1" cy="527.7" r="2.6"/><circle cx="789.4" cy="542.9" r="2.6"/><circle cx="779.9" cy="546.4" r="2.6"/><circle cx="770.6" cy="551.4" r="2.6"/><circle cx="798.8" cy="549.6" r="2.6"/><circle cx="723.0" cy="555.5" r="2.6"/><circle cx="919.5" cy="457.2" r="2.6"/><circle cx="906.4" cy="461.6" r="2.6"/><circle cx="896.9" cy="485.3" r="2.6"/><circle cx="878.0" cy="497.7" r="2.6"/><circle cx="887.5" cy="530.3" r="2.6"/><circle cx="868.7" cy="542.9" r="2.6"/><circle cx="910.2" cy="546.1" r="2.6"/><circle cx="929.1" cy="540.8" r="2.6"/><circle cx="938.4" cy="554.3" r="2.6"/><circle cx="217.5" cy="569.5" r="2.6"/><circle cx="223.4" cy="566.8" r="2.6"/><circle cx="229.1" cy="558.5" r="2.6"/><circle cx="231.0" cy="565.5" r="2.6"/><circle cx="267.1" cy="560.2" r="2.6"/><circle cx="274.4" cy="561.9" r="2.6"/><circle cx="281.9" cy="570.4" r="2.6"/><circle cx="302.1" cy="568.1" r="2.6"/><circle cx="338.5" cy="564.8" r="2.6"/><circle cx="345.8" cy="570.8" r="2.6"/><circle cx="381.9" cy="561.8" r="2.6"/><circle cx="389.4" cy="568.8" r="2.6"/><circle cx="393.0" cy="570.1" r="2.6"/><circle cx="394.1" cy="562.9" r="2.6"/><circle cx="395.7" cy="562.9" r="2.6"/><circle cx="447.9" cy="568.1" r="2.6"/><circle cx="461.1" cy="556.2" r="2.6"/><circle cx="466.8" cy="566.2" r="2.6"/><circle cx="485.6" cy="569.5" r="2.6"/><circle cx="542.2" cy="557.8" r="2.6"/><circle cx="551.7" cy="571.5" r="2.6"/><circle cx="553.7" cy="570.8" r="2.6"/><circle cx="567.0" cy="572.8" r="2.6"/><circle cx="597.3" cy="567.5" r="2.6"/><circle cx="621.3" cy="566.2" r="2.6"/><circle cx="663.0" cy="559.9" r="2.6"/><circle cx="719.6" cy="559.3" r="2.6"/><circle cx="723.3" cy="555.6" r="2.6"/><circle cx="732.9" cy="559.3" r="2.6"/><circle cx="817.8" cy="564.4" r="2.6"/><circle cx="915.9" cy="563.3" r="2.6"/><circle cx="938.4" cy="554.3" r="2.6"/><circle cx="948.1" cy="563.5" r="2.6"/><circle cx="957.7" cy="563.5" r="2.6"/><circle cx="963.0" cy="558.6" r="2.6"/><circle cx="974.5" cy="558.2" r="2.6"/><circle cx="976.5" cy="558.2" r="2.6"/><circle cx="993.2" cy="558.5" r="2.6"/><circle cx="1017.8" cy="556.6" r="2.6"/><circle cx="1021.8" cy="573.4" r="2.6"/><circle cx="1047.8" cy="562.9" r="2.6"/><circle cx="1053.4" cy="556.2" r="2.6"/><circle cx="1057.5" cy="558.6" r="2.6"/><circle cx="1066.7" cy="562.2" r="2.6"/><circle cx="1072.3" cy="573.0" r="2.6"/><circle cx="1076.3" cy="569.9" r="2.6"/><circle cx="1082.0" cy="562.9" r="2.6"/><circle cx="1104.7" cy="564.2" r="2.6"/><circle cx="1108.0" cy="562.2" r="2.6"/><circle cx="1125.2" cy="554.9" r="2.6"/><circle cx="1130.9" cy="569.5" r="2.6"/><circle cx="1134.9" cy="559.6" r="2.6"/><circle cx="1138.4" cy="569.2" r="2.6"/><circle cx="1164.9" cy="562.6" r="2.6"/><circle cx="1183.4" cy="559.6" r="2.6"/><circle cx="1183.7" cy="559.8" r="2.6"/><circle cx="1228.9" cy="564.3" r="2.6"/><circle cx="1230.8" cy="567.2" r="2.6"/><circle cx="1232.9" cy="569.1" r="2.6"/><circle cx="1261.3" cy="559.0" r="2.6"/><circle cx="1268.7" cy="558.8" r="2.6"/><circle cx="1291.1" cy="570.4" r="2.6"/><circle cx="1300.8" cy="571.5" r="2.6"/><circle cx="1304.7" cy="563.0" r="2.6"/><circle cx="1316.0" cy="558.2" r="2.6"/></g><g fill="#ee6666" fill-opacity="0.8"><circle cx="934.6" cy="498.6" r="2.6"/><circle cx="247.9" cy="568.1" r="2.6"/><circle cx="251.9" cy="570.8" r="2.6"/><circle cx="259.4" cy="571.5" r="2.6"/><circle cx="272.4" cy="561.1" r="2.6"/><circle cx="280.1" cy="562.2" r="2.6"/><circle cx="289.3" cy="555.6" r="2.6"/><circle cx="306.4" cy="567.5" r="2.6"/><circle cx="319.3" cy="562.2" r="2.6"/><circle cx="317.8" cy="568.8" r="2.6"/><circle cx="342.1" cy="569.5" r="2.6"/><circle cx="353.5" cy="569.2" r="2.6"/><circle cx="359.0" cy="572.8" r="2.6"/><circle cx="399.0" cy="567.5" r="2.6"/><circle cx="401.0" cy="558.2" r="2.6"/><circle cx="406.6" cy="570.4" r="2.6"/><circle cx="421.5" cy="558.6" r="2.6"/><circle cx="425.4" cy="558.6" r="2.6"/><circle cx="427.1" cy="567.5" r="2.6"/><circle cx="434.7" cy="564.2" r="2.6"/><circle cx="442.2" cy="567.5" r="2.6"/><circle cx="465.1" cy="569.5" r="2.6"/><circle cx="468.8" cy="559.6" r="2.6"/><circle cx="557.4" cy="558.2" r="2.6"/><circle cx="559.7" cy="559.6" r="2.6"/><circle cx="561.3" cy="568.5" r="2.6"/><circle cx="565.0" cy="556.2" r="2.6"/><circle cx="572.5" cy="572.1" r="2.6"/><circle cx="583.9" cy="558.2" r="2.6"/><circle cx="594.1" cy="565.5" r="2.6"/><circle cx="595.3" cy="564.8" r="2.6"/><circle cx="604.6" cy="569.7" r="2.6"/><circle cx="615.8" cy="560.6" r="2.6"/><circle cx="708.4" cy="561.1" r="2.6"/><circle cx="710.4" cy="562.2" r="2.6"/><circle cx="730.9" cy="571.2" r="2.6"/><circle cx="827.3" cy="555.3" r="2.6"/><circle cx="838.5" cy="563.5" r="2.6"/><circle cx="842.5" cy="558.9" r="2.6"/><circle cx="849.8" cy="563.9" r="2.6"/><circle cx="944.1" cy="565.9" r="2.6"/><circle cx="955.6" cy="559.2" r="2.6"/><circle cx="991.3" cy="568.8" r="2.6"/><circle cx="996.9" cy="570.8" r="2.6"/><circle cx="1030.9" cy="561.9" r="2.6"/><circle cx="1055.5" cy="566.2" r="2.6"/><circle cx="1064.8" cy="568.1" r="2.6"/><circle cx="1097.4" cy="564.2" r="2.6"/><circle cx="1099.0" cy="563.5" r="2.6"/><circle cx="1114.0" cy="569.5" r="2.6"/><circle cx="1140.4" cy="564.8" r="2.6"/><circle cx="1238.7" cy="562.1" r="2.6"/><circle cx="1248.0" cy="558.5" r="2.6"/><circle cx="1249.8" cy="566.2" r="2.6"/><circle cx="1276.3" cy="560.9" r="2.6"/><circle cx="1295.0" cy="564.4" r="2.6"/><circle cx="1299.0" cy="559.3" r="2.6"/><circle cx="1306.5" cy="566.0" r="2.6"/><circle cx="1317.6" cy="562.5" r="2.6"/></g></svg>
<div class="t" style="left:150px;width:40px;text-align:right;top:724px;font-size:12px;line-height:14px;color:#6e7079">0</div>
<div class="t" style="left:150px;width:40px;text-align:right;top:654px;font-size:12px;line-height:14px;color:#6e7079">2</div>
<div class="t" style="left:150px;width:40px;text-align:right;top:584px;font-size:12px;line-height:14px;color:#6e7079">4</div>
<div class="t" style="left:150px;width:40px;text-align:right;top:514px;font-size:12px;line-height:14px;color:#6e7079">6</div>
<div class="t" style="left:150px;width:40px;text-align:right;top:444px;font-size:12px;line-height:14px;color:#6e7079">8</div>
<div class="t" style="left:327px;width:60px;text-align:center;top:738px;font-size:12px;line-height:14px;color:#6e7079">01:00</div>
<div class="t" style="left:485px;width:60px;text-align:center;top:738px;font-size:12px;line-height:14px;color:#6e7079">02:00</div>
<div class="t" style="left:643px;width:60px;text-align:center;top:738px;font-size:12px;line-height:14px;color:#6e7079">03:00</div>
<div class="t" style="left:801px;width:60px;text-align:center;top:738px;font-size:12px;line-height:14px;color:#6e7079">04:00</div>
<div class="t" style="left:959px;width:60px;text-align:center;top:738px;font-size:12px;line-height:14px;color:#6e7079">05:00</div>
<div class="t" style="left:1117px;width:60px;text-align:center;top:738px;font-size:12px;line-height:14px;color:#6e7079">06:00</div>
<div class="t" style="left:1275px;width:60px;text-align:center;top:738px;font-size:12px;line-height:14px;color:#6e7079">07:00</div>
<svg class="b" style="left:0px;top:0px;" width="1512" height="795" viewBox="0 0 1512 795"><circle cx="395.2" cy="398.5" r="7" fill="#5470c6" fill-opacity="0.8"/><circle cx="711.6" cy="398.5" r="7" fill="#91cc75" fill-opacity="0.8"/><circle cx="861.2" cy="398.5" r="7" fill="#fac858" fill-opacity="0.8"/><circle cx="1010.8" cy="398.5" r="7" fill="#ee6666" fill-opacity="0.8"/><path d="M539.2 398.5H563.8" stroke="#8b0000" stroke-width="2"/><circle cx="551.5" cy="398.5" r="5" fill="#fff" stroke="#8b0000" stroke-width="2"/><path d="M620.9000000000001 398.5H645.5" stroke="#8b0000" stroke-width="2"/><circle cx="633.2" cy="398.5" r="5" fill="#fff" stroke="#8b0000" stroke-width="2"/></svg>
<div class="t" style="left:412.3px;top:392.64px;font-size:12px;line-height:12px;color:#333;font-weight:normal;letter-spacing:0px;">leck(fullType=Type D)</div>
<div class="t" style="left:569px;top:392.64px;font-size:12px;line-height:12px;color:#333;font-weight:normal;letter-spacing:0px;">leckMin</div>
<div class="t" style="left:651px;top:392.64px;font-size:12px;line-height:12px;color:#333;font-weight:normal;letter-spacing:0px;">leckMax</div>
<div class="t" style="left:729px;top:392.64px;font-size:12px;line-height:12px;color:#333;font-weight:normal;letter-spacing:0px;">leck(fullType=Type A)</div>
<div class="t" style="left:878.5px;top:392.64px;font-size:12px;line-height:12px;color:#333;font-weight:normal;letter-spacing:0px;">leck(fullType=Type B)</div>
<div class="t" style="left:1028.5px;top:392.64px;font-size:12px;line-height:12px;color:#333;font-weight:normal;letter-spacing:0px;">leck(fullType=Type C)</div>
<svg class="b" style="left:0px;top:0px;" width="1512" height="795" viewBox="0 0 1512 795"><path d="M1286.5 358.5h7l4 4v11h-11z M1293.5 358.5v4h4 M1289 365.5h6 M1289 368.5h6 M1289 371.5h6" fill="none" stroke="#666" stroke-width="1"/><path d="M1310.5 367.5 1313 367.5 1315 358.5 1317.5 370.5 1319.5 366.5 1320.5 368 1324.5 368 M1310.5 373.5H1325" fill="none" stroke="#666" stroke-width="1"/><path d="M1338.5 365.5h3v6h-3z M1343.5 362.5h3v9h-3z M1348.5 358.5h3v13h-3z M1338 373.5H1352.5" fill="none" stroke="#666" stroke-width="1"/><path d="M1372.8 359 1380.8 363.5 1372.8 368 1364.8 363.5z M1364.8 365.5 1372.8 370 1380.8 365.5 M1364.8 367.5 1372.8 372 1380.8 367.5 M1364.8 369.5 1372.8 374 1380.8 369.5" fill="none" stroke="#666" stroke-width="1"/><path d="M1394 364a7.3 7.3 0 0 1 13.4-2.5 M1408 368a7.3 7.3 0 0 1-13.4 2.5 M1407.8 358.5v3.5h-3.5 M1393.8 374v-3.5h3.5" fill="none" stroke="#666" stroke-width="1"/><path d="M1427.6 358.5v11 M1422.5 364.5l5.1 5.1 5.1-5.1 M1421 368v5.5h13.5V368" fill="none" stroke="#666" stroke-width="1"/><path d="M1447.5 366.2c4.5-6.5 11-6.5 15.5 0-4.5 6.5-11 6.5-15.5 0z" fill="none" stroke="#666" stroke-width="1.1"/><circle cx="1455.2" cy="366.2" r="3" fill="none" stroke="#666" stroke-width="1.6"/></svg>
<svg class="b" style="left:0px;top:0px;" width="1512" height="795" viewBox="0 0 1512 795"><rect x="202" y="757" width="1133.5" height="36" fill="#e9eef9" fill-opacity="0.35"/><defs><linearGradient id="fg" x1="0" y1="0" x2="0" y2="1"><stop offset="0" stop-color="#e6ebfb"/><stop offset="1" stop-color="#c9d1e9"/></linearGradient></defs><rect x="202" y="763" width="1133.5" height="30" fill="url(#fg)"/><rect x="202" y="757" width="1133.5" height="6" fill="#dde2f0"/><path d="M202.0 785.3 L207.5 786.1 L213.0 785.7 L218.5 786.3 L224.0 786.3 L229.5 784.9 L235.0 784.7 L240.5 786.9 L246.0 785.4 L251.5 785.3 L257.0 787.3 L262.5 785.9 L268.0 786.9 L273.5 785.9 L279.0 786.4 L284.5 785.1 L290.0 786.4 L295.5 787.0 L301.0 786.1 L306.5 786.6 L312.0 786.4 L317.5 784.9 L323.0 786.7 L328.5 786.2 L334.0 785.5 L339.5 784.8 L345.0 787.0 L350.5 785.9 L356.0 786.6 L361.5 787.0 L367.0 786.6 L372.5 787.1 L378.0 785.7 L383.5 786.8 L389.0 785.9 L394.5 787.1 L400.0 787.0 L405.5 785.0 L411.0 785.1 L416.5 785.3 L422.0 787.2 L427.5 785.8 L433.0 786.3 L438.5 785.5 L444.0 786.0 L449.5 785.7 L455.0 785.6 L460.5 786.2 L466.0 786.2 L471.5 787.1 L477.0 786.5 L480.0 785.2 L489.3 786.1 L497.6 784.6 L507.8 786.5 L526.3 785.9 L531.9 777.6 L536.5 777.2 L541.1 779.6 L546.7 783.7 L552.2 769.4 L561.5 773.9 L566.1 774.3 L571.7 785.6 L576.3 769.8 L581.5 784.3 L586.5 768.9 L591.1 780.6 L595.7 782.8 L601.3 783.1 L605.9 772.0 L610.6 770.2 L616.1 771.3 L621.7 769.1 L626.3 770.6 L630.9 777.6 L640.2 774.4 L645.4 780.6 L650.4 771.3 L655.6 786.1 L660.6 780.0 L665.2 776.3 L670.7 782.2 L675.4 782.4 L684.6 771.3 L690.2 779.1 L694.8 775.4 L700.0 786.9 L709.6 786.5 L718.9 786.5 L724.4 779.6 L730.0 784.3 L734.6 782.4 L739.3 783.1 L743.9 773.5 L748.9 778.3 L753.7 773.1 L758.7 784.6 L760.0 782.8 L763.7 770.2 L768.3 775.4 L773.3 774.4 L778.5 781.9 L783.1 779.1 L788.7 768.9 L793.3 770.7 L798.0 782.8 L803.5 779.6 L808.5 781.9 L813.7 777.2 L818.3 769.4 L823.3 771.3 L828.1 779.6 L833.1 778.5 L837.8 780.9 L842.4 785.6 L847.4 770.2 L852.6 780.4 L857.6 779.1 L862.4 773.9 L867.4 775.9 L872.2 784.6 L877.0 770.6 L882.2 787.4 L891.9 787.4 L897.0 785.2 L902.2 786.1 L907.2 785.0 L912.2 785.6 L917.0 787.6 L921.7 778.7 L926.7 784.3 L931.3 784.3 L936.3 774.4 L941.5 784.3 L946.1 785.0 L951.1 778.5 L955.9 780.9 L960.9 781.5 L965.9 786.1 L970.7 783.7 L975.7 772.2 L980.7 785.0 L985.6 778.7 L990.6 775.7 L995.6 780.6 L1000.4 775.7 L1005.4 781.5 L1010.4 777.6 L1015.6 785.9 L1020.2 785.6 L1024.8 784.3 L1030.4 783.1 L1035.0 783.7 L1040.0 786.5 L1043.0 787.1 L1048.5 786.9 L1054.0 787.3 L1059.5 786.4 L1065.0 785.1 L1070.5 786.9 L1076.0 787.2 L1081.5 787.1 L1087.0 786.2 L1092.5 786.6 L1098.0 785.2 L1103.5 786.9 L1109.0 786.2 L1114.5 785.4 L1120.0 784.9 L1125.5 786.9 L1131.0 787.3 L1136.5 784.9 L1142.0 786.8 L1147.5 785.8 L1153.0 785.1 L1158.5 785.5 L1164.0 786.7 L1169.5 787.0 L1175.0 784.8 L1180.5 786.3 L1186.0 784.8 L1191.5 786.6 L1197.0 785.6 L1202.5 787.0 L1208.0 787.2 L1213.5 786.0 L1219.0 787.3 L1224.5 785.5 L1230.0 784.9 L1235.5 786.3 L1241.0 784.8 L1246.5 785.2 L1252.0 785.8 L1257.5 786.3 L1263.0 785.1 L1268.5 784.8 L1274.0 787.0 L1279.5 785.5 L1285.0 787.2 L1290.5 787.0 L1296.0 785.7 L1301.5 785.9 L1307.0 786.1 L1312.5 786.4 L1318.0 786.2 L1323.5 786.2 L1329.0 786.3 L1334.5 787.1 L1335.5 786.0 L1335.5 793 L202 793z" fill="#8fb0f7" fill-opacity="0.2"/><path d="M202.0 785.3 L207.5 786.1 L213.0 785.7 L218.5 786.3 L224.0 786.3 L229.5 784.9 L235.0 784.7 L240.5 786.9 L246.0 785.4 L251.5 785.3 L257.0 787.3 L262.5 785.9 L268.0 786.9 L273.5 785.9 L279.0 786.4 L284.5 785.1 L290.0 786.4 L295.5 787.0 L301.0 786.1 L306.5 786.6 L312.0 786.4 L317.5 784.9 L323.0 786.7 L328.5 786.2 L334.0 785.5 L339.5 784.8 L345.0 787.0 L350.5 785.9 L356.0 786.6 L361.5 787.0 L367.0 786.6 L372.5 787.1 L378.0 785.7 L383.5 786.8 L389.0 785.9 L394.5 787.1 L400.0 787.0 L405.5 785.0 L411.0 785.1 L416.5 785.3 L422.0 787.2 L427.5 785.8 L433.0 786.3 L438.5 785.5 L444.0 786.0 L449.5 785.7 L455.0 785.6 L460.5 786.2 L466.0 786.2 L471.5 787.1 L477.0 786.5 L480.0 785.2 L489.3 786.1 L497.6 784.6 L507.8 786.5 L526.3 785.9 L531.9 777.6 L536.5 777.2 L541.1 779.6 L546.7 783.7 L552.2 769.4 L561.5 773.9 L566.1 774.3 L571.7 785.6 L576.3 769.8 L581.5 784.3 L586.5 768.9 L591.1 780.6 L595.7 782.8 L601.3 783.1 L605.9 772.0 L610.6 770.2 L616.1 771.3 L621.7 769.1 L626.3 770.6 L630.9 777.6 L640.2 774.4 L645.4 780.6 L650.4 771.3 L655.6 786.1 L660.6 780.0 L665.2 776.3 L670.7 782.2 L675.4 782.4 L684.6 771.3 L690.2 779.1 L694.8 775.4 L700.0 786.9 L709.6 786.5 L718.9 786.5 L724.4 779.6 L730.0 784.3 L734.6 782.4 L739.3 783.1 L743.9 773.5 L748.9 778.3 L753.7 773.1 L758.7 784.6 L760.0 782.8 L763.7 770.2 L768.3 775.4 L773.3 774.4 L778.5 781.9 L783.1 779.1 L788.7 768.9 L793.3 770.7 L798.0 782.8 L803.5 779.6 L808.5 781.9 L813.7 777.2 L818.3 769.4 L823.3 771.3 L828.1 779.6 L833.1 778.5 L837.8 780.9 L842.4 785.6 L847.4 770.2 L852.6 780.4 L857.6 779.1 L862.4 773.9 L867.4 775.9 L872.2 784.6 L877.0 770.6 L882.2 787.4 L891.9 787.4 L897.0 785.2 L902.2 786.1 L907.2 785.0 L912.2 785.6 L917.0 787.6 L921.7 778.7 L926.7 784.3 L931.3 784.3 L936.3 774.4 L941.5 784.3 L946.1 785.0 L951.1 778.5 L955.9 780.9 L960.9 781.5 L965.9 786.1 L970.7 783.7 L975.7 772.2 L980.7 785.0 L985.6 778.7 L990.6 775.7 L995.6 780.6 L1000.4 775.7 L1005.4 781.5 L1010.4 777.6 L1015.6 785.9 L1020.2 785.6 L1024.8 784.3 L1030.4 783.1 L1035.0 783.7 L1040.0 786.5 L1043.0 787.1 L1048.5 786.9 L1054.0 787.3 L1059.5 786.4 L1065.0 785.1 L1070.5 786.9 L1076.0 787.2 L1081.5 787.1 L1087.0 786.2 L1092.5 786.6 L1098.0 785.2 L1103.5 786.9 L1109.0 786.2 L1114.5 785.4 L1120.0 784.9 L1125.5 786.9 L1131.0 787.3 L1136.5 784.9 L1142.0 786.8 L1147.5 785.8 L1153.0 785.1 L1158.5 785.5 L1164.0 786.7 L1169.5 787.0 L1175.0 784.8 L1180.5 786.3 L1186.0 784.8 L1191.5 786.6 L1197.0 785.6 L1202.5 787.0 L1208.0 787.2 L1213.5 786.0 L1219.0 787.3 L1224.5 785.5 L1230.0 784.9 L1235.5 786.3 L1241.0 784.8 L1246.5 785.2 L1252.0 785.8 L1257.5 786.3 L1263.0 785.1 L1268.5 784.8 L1274.0 787.0 L1279.5 785.5 L1285.0 787.2 L1290.5 787.0 L1296.0 785.7 L1301.5 785.9 L1307.0 786.1 L1312.5 786.4 L1318.0 786.2 L1323.5 786.2 L1329.0 786.3 L1334.5 787.1 L1335.5 786.0" fill="none" stroke="#8fb0f7" stroke-width="1"/><path d="M202.5 763V793 M1335.0 763V793" stroke="#acb8d1" stroke-width="1"/><rect x="199.5" y="768.5" width="6" height="19" rx="2" fill="#fff" stroke="#acb8d1"/><rect x="1331.5" y="768.5" width="6" height="19" rx="2" fill="#fff" stroke="#acb8d1"/><path d="M766 758.5v3 M768.5 758.5v3 M771 758.5v3" stroke="#fff" stroke-width="1"/></svg>
<div class="b" style="left:1497px;top:39px;width:15px;height:756px;background:#fafafa;border-left:1px solid #e8e8e8;box-sizing:border-box"></div>
<div class="b" style="left:1501px;top:42px;width:8px;height:421px;background:#c1c1c1;border-radius:4px"></div>
<div class="b" style="left:1436px;top:721px;width:56px;height:56px;background:#312a52;border-radius:50%;box-shadow:0 3px 5px -1px rgba(0,0,0,.2),0 6px 10px 0 rgba(0,0,0,.14),0 1px 18px 0 rgba(0,0,0,.12)"></div>
<svg class="b" style="left:1451.2px;top:735.8px;color:#fff" width="24" height="24" viewBox="0 0 24 24" fill="#fff"><path d="M20 2H4c-1.1 0-1.99.9-1.99 2L2 22l4-4h14c1.1 0 2-.9 2-2V4c0-1.1-.9-2-2-2zM6 9h12v2H6V9zm8 5H6v-2h8v2zm4-6H6V6h12v2z"/></svg>
<div class="b" style="left:0px;top:0px;width:1px;height:795px;background:rgba(255,255,255,0.28)"></div>
<div class="b" style="left:1px;top:0px;width:1px;height:795px;background:rgba(255,255,255,0.1)"></div>
<div class="b" style="left:1511px;top:0px;width:1px;height:795px;background:rgba(255,255,255,0.25)"></div>
<svg class="b" style="left:0px;top:786px;" width="9" height="9" viewBox="0 0 9 9"><path d="M0 0V9H9A9 9 0 0 1 0 0z" fill="#000"/></svg>
<svg class="b" style="left:1503px;top:786px;" width="9" height="9" viewBox="0 0 9 9"><path d="M9 0V9H0A9 9 0 0 0 9 0z" fill="#000"/></svg>
</body></html>
